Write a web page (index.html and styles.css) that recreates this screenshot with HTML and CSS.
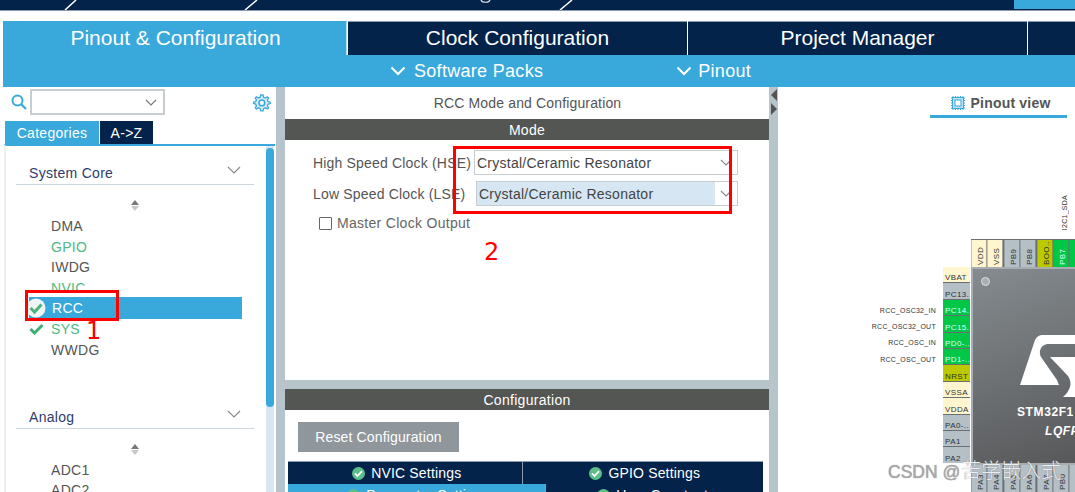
FILE: index.html
```html
<!DOCTYPE html>
<html lang="en">
<head>
<meta charset="utf-8">
<title>RCC Mode and Configuration</title>
<link rel="stylesheet" href="styles.css">
</head>
<body>
<div class="page">
  <header class="topbar">
    <svg class="crumbs" width="1014" height="10" viewBox="0 0 1014 10"><path d="M65 10 L76 0 M245 10 L257 0 M560 10 L572 0" stroke="#fff" stroke-width="1.5" fill="none"/><path d="M481 0 C482 3 489 3 490 0" stroke="#dfe5ea" stroke-width="1.2" fill="none"/></svg>
    <span class="top-accent"></span>
  </header>
  <nav class="tabs">
    <div class="tab tab-active">Pinout &amp; Configuration</div>
    <div class="tab tab-clock">Clock Configuration</div>
    <div class="tab tab-project">Project Manager</div>
    <div class="tab tab-tools"></div>
  </nav>
  <div class="subbar">
    <div class="sub sub-packs"><svg width="16" height="10" viewBox="0 0 16 10"><path d="M1.5 1.5 L8 8 L14.5 1.5" stroke="#fff" stroke-width="2" fill="none"/></svg>Software Packs</div>
    <div class="sub sub-pinout"><svg width="16" height="10" viewBox="0 0 16 10"><path d="M1.5 1.5 L8 8 L14.5 1.5" stroke="#fff" stroke-width="2" fill="none"/></svg>Pinout</div>
  </div>
  <main class="main">
    <aside class="left">
      <div class="search">
        <svg width="16" height="16" viewBox="0 0 16 16"><circle cx="6.5" cy="6.5" r="5" stroke="#39a9dc" stroke-width="2" fill="none"/><path d="M10 10 L15 15" stroke="#39a9dc" stroke-width="2.2"/></svg>
        <div class="combo"><svg width="12" height="7" viewBox="0 0 12 7"><path d="M1 1 L6 6 L11 1" stroke="#777" stroke-width="1.2" fill="none"/></svg></div>
        <svg class="gear" width="19" height="19" viewBox="0 0 24 24"><path d="M12 2.5 L14 2.5 L14.6 5.3 L17 6.3 L19.4 4.8 L20.9 6.3 L19.4 8.7 L20.4 11 L23 11.7 L23 13.3 L20.4 14 L19.4 16.3 L20.9 18.7 L19.4 20.2 L17 18.7 L14.6 19.7 L14 22.5 L11 22.5 L10.4 19.7 L8 18.7 L5.6 20.2 L4.1 18.7 L5.6 16.3 L4.6 14 L2 13.3 L2 11.7 L4.6 11 L5.6 8.7 L4.1 6.3 L5.6 4.8 L8 6.3 L10.4 5.3 L11 2.5 Z" stroke="#39a9dc" stroke-width="1.6" fill="#d6ecf8"/><circle cx="12.5" cy="12.5" r="3.6" stroke="#39a9dc" stroke-width="2" fill="#fff"/></svg>
      </div>
      <div class="cat-tabs">
        <div class="cat cat-on">Categories</div>
        <div class="cat cat-off">A-&gt;Z</div>
      </div>
      <div class="tree">
        <div class="tree-body">
          <div class="group-head"><span>System Core</span><svg width="14" height="8" viewBox="0 0 14 8"><path d="M1 1 L7 7 L13 1" stroke="#888" stroke-width="1.1" fill="none"/></svg></div>
          <div class="sorter"><span class="up"></span><span class="down"></span></div>
          <ul class="items">
            <li>DMA</li>
            <li class="ok">GPIO</li>
            <li>IWDG</li>
            <li class="ok">NVIC</li>
            <li class="sel"><svg class="mark-sel" width="20" height="20" viewBox="0 0 20 20"><circle cx="10" cy="10" r="9.5" fill="#eef5f3"/><path d="M4.5 10 L8.5 14 L15.5 6.5" stroke="#4cb37c" stroke-width="3" fill="none"/></svg>RCC</li>
            <li class="ok"><svg class="mark" width="15" height="12" viewBox="0 0 15 12"><path d="M1.5 6 L5.5 10 L13.5 2" stroke="#3fae72" stroke-width="3" fill="none"/></svg>SYS</li>
            <li>WWDG</li>
          </ul>
          <div class="group-head group-analog"><span>Analog</span><svg width="14" height="8" viewBox="0 0 14 8"><path d="M1 1 L7 7 L13 1" stroke="#888" stroke-width="1.1" fill="none"/></svg></div>
          <div class="sorter sorter-analog"><span class="up"></span><span class="down"></span></div>
          <ul class="items">
            <li>ADC1</li>
            <li>ADC2</li>
          </ul>
        </div>
        <div class="scroll"><div class="thumb"></div></div>
      </div>
      <div class="red box-rcc"></div>
      <span class="note note-1">1</span>
    </aside>
    <div class="split"></div>
    <section class="center">
      <div class="mode-pane">
        <h1 class="pane-title">RCC Mode and Configuration</h1>
        <div class="bar">Mode</div>
        <div class="form">
          <div class="row"><label class="lab">High Speed Clock (HSE)</label>
            <div class="select">Crystal/Ceramic Resonator<svg width="12" height="7" viewBox="0 0 12 7"><path d="M1 1 L6 6 L11 1" stroke="#888" stroke-width="1.1" fill="none"/></svg></div></div>
          <div class="row row-low"><label class="lab">Low Speed Clock (LSE)</label>
            <div class="select select-hi"><span class="hi">Crystal/Ceramic Resonator</span><svg width="12" height="7" viewBox="0 0 12 7"><path d="M1 1 L6 6 L11 1" stroke="#888" stroke-width="1.1" fill="none"/></svg></div></div>
          <div class="check"><span class="box"></span>Master Clock Output</div>
        </div>
        <div class="red box-clock"></div>
        <span class="note note-2">2</span>
      </div>
      <div class="config-pane">
        <div class="bar">Configuration</div>
        <button class="reset">Reset Configuration</button>
        <div class="cfg-tabs">
          <div class="cfg"><svg width="13" height="13" viewBox="0 0 13 13"><circle cx="6.5" cy="6.5" r="6.5" fill="#5cbf8a"/><path d="M3 6.5 L5.5 9 L10 4.2" stroke="#fff" stroke-width="1.8" fill="none"/></svg>NVIC Settings</div>
          <div class="cfg"><svg width="13" height="13" viewBox="0 0 13 13"><circle cx="6.5" cy="6.5" r="6.5" fill="#5cbf8a"/><path d="M3 6.5 L5.5 9 L10 4.2" stroke="#fff" stroke-width="1.8" fill="none"/></svg>GPIO Settings</div>
          <div class="cfg cfg-on"><svg width="13" height="13" viewBox="0 0 13 13"><circle cx="6.5" cy="6.5" r="6.5" fill="#5cbf8a"/><path d="M3 6.5 L5.5 9 L10 4.2" stroke="#fff" stroke-width="1.8" fill="none"/></svg>Parameter Settings</div>
          <div class="cfg cfg-user"><svg width="13" height="13" viewBox="0 0 13 13"><circle cx="6.5" cy="6.5" r="6.5" fill="#5cbf8a"/><path d="M3 6.5 L5.5 9 L10 4.2" stroke="#fff" stroke-width="1.8" fill="none"/></svg>User Constants</div>
        </div>
      </div>
    </section>
    <div class="split split-arrows">
      <span class="arrow arrow-l"></span>
      <span class="arrow arrow-r"></span>
    </div>
    <section class="pinout">
      <div class="view-tab"><svg width="16" height="16" viewBox="0 0 16 16"><path d="M3 1v14M5.5 1v14M8 1v14M10.5 1v14M13 1v14M1 3h14M1 5.5h14M1 8h14M1 10.5h14M1 13h14" stroke="#39a9dc" stroke-width="1"/><rect x="2.5" y="2.5" width="11" height="11" fill="#bfe1f3" stroke="#39a9dc"/><rect x="5" y="5" width="6" height="6" fill="#fff" stroke="#39a9dc"/></svg>Pinout view</div>
      <span class="sig sig-v">I2C1_SDA</span>
      <div class="pins-top">
        <span class="pin v pw">VDD</span><span class="pin v pw">VSS</span><span class="pin v pg">PB9</span><span class="pin v pg">PB8</span><span class="pin v py">BOO..</span><span class="pin v pn">PB7</span><span class="pin v pn"></span>
      </div>
      <div class="pins-left">
        <span class="pin pw">VBAT</span><span class="pin pg">PC13..</span><span class="pin pn">PC14..</span><span class="pin pn">PC15..</span><span class="pin pn">PD0-..</span><span class="pin pn">PD1-..</span><span class="pin py">NRST</span><span class="pin pw">VSSA</span><span class="pin pw">VDDA</span><span class="pin pg">PA0-..</span><span class="pin pg">PA1</span><span class="pin pg">PA2</span>
      </div>
      <div class="sigs">
        <span class="sig">RCC_OSC32_IN</span><span class="sig">RCC_OSC32_OUT</span><span class="sig">RCC_OSC_IN</span><span class="sig">RCC_OSC_OUT</span>
      </div>
      <div class="chip">
        <span class="dot"></span>
        <svg class="st" width="60" height="70" viewBox="0 0 60 70"><path d="M2 52 L17 7 C19 3 22 2 25 2 L57 2 L57 11 L29 11 C21 13 21 20 23 24 L39 47 L41 52 Z M32 24 L57 24 L57 64 L45 64 C52 58 55 50 50 43 Z" fill="#fff"/></svg>
        <span class="chip-name">STM32F1</span>
        <span class="chip-pkg">LQFP</span>
      </div>
      <div class="pins-bottom">
        <span class="pin v pg">PA3</span><span class="pin v pg">PA4</span><span class="pin v pg">PA5</span><span class="pin v pg">PA6</span><span class="pin v pg">PA7</span><span class="pin v pg">PB0</span><span class="pin v pg"></span>
      </div>
      <span class="mark-csdn">CSDN @<span class="mark-cjk">苦学嵌入式</span></span>
    </section>
  </main>
</div>
</body>
</html>
```
FILE: styles.css
```css
* { box-sizing: border-box; }
html, body { margin: 0; padding: 0; background: #fff; }
body { font-family: "Liberation Sans", Arial, sans-serif; color: #555; }
.page { width: 1075px; height: 492px; overflow: hidden; display: flex; flex-direction: column; }

.topbar { height: 11px; flex: none; background: #03234b; border-bottom: 1px solid #8d9aa9; display: flex; justify-content: space-between; }
.crumbs { display: block; }
.top-accent { width: 61px; height: 9px; background: #39a9dc; }

.tabs { margin: 10px 0 0 3px; height: 34px; flex: none; display: flex; gap: 1px; }
.tab { display: flex; align-items: center; justify-content: center; background: #03234b; color: #fff; font-size: 21px; padding-bottom: 2px; border-top: 1px solid #8d9aa9; white-space: nowrap; }
.tab-active { width: 344px; background: #39a9dc; border-top-color: #39a9dc; border-right: 1px solid #b9dff2; padding-left: 2px; }
.tab-clock { width: 339px; }
.tab-project { width: 339px; }
.tab-tools { flex: 1; }

.subbar { margin-left: 3px; height: 32px; flex: none; background: #39a9dc; position: relative; display: flex; color: #fff; font-size: 18px; letter-spacing: .3px; }
.sub { display: flex; align-items: center; gap: 8px; }
.sub-packs { margin-left: 387px; }
.sub-pinout { margin-left: 133px; gap: 6px; }

.main { flex: 1; display: flex; min-height: 0; }
.left { width: 276px; flex: none; padding-left: 3px; position: relative; display: flex; flex-direction: column; min-height: 0; }

.search { display: flex; align-items: center; height: 33px; flex: none; padding: 0 5px 3px 8px; }
.search > svg:first-child { flex: none; margin-top: -1px; }
.combo { width: 135px; height: 26px; margin-left: 3px; border: 2px solid #c8cdd1; display: flex; align-items: center; justify-content: flex-end; padding-right: 6px; }
.gear { margin-left: auto; }

.cat-tabs { display: flex; gap: 1px; padding: 1px 0 0 2px; height: 24px; flex: none; }
.cat { display: flex; align-items: center; justify-content: center; color: #fff; font-size: 14px; letter-spacing: .3px; }
.cat-on { width: 94px; background: #39a9dc; }
.cat-off { width: 53px; background: #03234b; }

.tree { flex: 1; min-height: 0; border-top: 2px solid #39a9dc; margin-left: 1px; border-left: 2px solid #eee; display: flex; overflow: hidden; margin-right: 1px; }
.tree-body { width: 260px; flex: none; padding: 0 0 0 10px; }
.group-head { width: 238px; height: 39px; border-bottom: 1px solid #ccd5dc; display: flex; align-items: flex-end; justify-content: space-between; padding: 0 13px 3px 13px; color: #2c3c6b; font-size: 14px; letter-spacing: .3px; }
.group-head svg { margin-bottom: 7px; }
.group-analog { margin-top: 29px; height: 40px; }
.sorter { width: 238px; height: 30.5px; display: flex; flex-direction: column; align-items: center; justify-content: center; gap: 1px; padding-right: 1px; padding-top: 10px; }
.sorter-analog { height: 30px; }
.up { width: 0; height: 0; border: 4.5px solid transparent; border-top: 0; border-bottom: 5px solid #777; }
.down { width: 0; height: 0; border: 4.5px solid transparent; border-bottom: 0; border-top: 5px solid #c4c8cb; }
.items { list-style: none; margin: 0; padding: 0; width: 226px; }
.items li { height: 20.7px; padding-left: 35px; display: flex; align-items: center; font-size: 14px; letter-spacing: .3px; color: #555; position: relative; }
.items .ok { color: #4fb97f; }
.items .sel { background: #39a9dc; color: #fff; margin-left: 13px; padding-left: 23px; width: 213px; height: 22px; margin-top: -1px; margin-bottom: -.3px; }
.mark-sel { position: absolute; left: -3px; top: 1px; }
.mark { position: absolute; left: 13px; top: 4px; }

.scroll { width: 8px; flex: none; background: #d6e6f3; }
.thumb { height: 259px; margin-top: 2px; background: #39a9dc; border-radius: 4px; }

.red { position: absolute; border: 3px solid #f00; pointer-events: none; }
.box-rcc { left: 25px; top: 203px; width: 94px; height: 31px; }
.note { position: absolute; color: #f00; font-family: "DejaVu Sans", sans-serif; font-size: 24px; line-height: 1; }
.note-1 { left: 86px; top: 232px; }

.split { width: 9px; flex: none; background: #b8c4cc; position: relative; }
.split-arrows { display: flex; flex-direction: column; align-items: center; padding-top: 2px; gap: 2px; }
.arrow { width: 0; height: 0; border: 6px solid transparent; }
.arrow-l { border-left: 0; border-right: 6px solid #555; }
.arrow-r { border-right: 0; border-left: 6px solid #555; }

.center { width: 484px; flex: none; display: flex; flex-direction: column; background: #b8c4cc; min-height: 0; }
.mode-pane { height: 293px; flex: none; background: #fff; position: relative; }
.pane-title { margin: 0; height: 32px; display: flex; align-items: center; justify-content: center; font-weight: normal; font-size: 14px; letter-spacing: .15px; padding-left: 1px; color: #555; }
.bar { height: 21px; flex: none; background: #545654; color: #fff; display: flex; align-items: center; justify-content: center; font-size: 14px; letter-spacing: .3px; }
.form { padding: 10px 0 0 28px; }
.row { display: flex; align-items: center; height: 25px; }
.row-low { margin-top: 6px; }
.lab { width: 161px; font-size: 14px; letter-spacing: .18px; color: #555; flex: none; white-space: nowrap; }
.select { width: 264px; height: 25px; border: 1px solid #c8cdd1; display: flex; align-items: center; justify-content: space-between; padding: 0 5px 0 2px; font-size: 14px; letter-spacing: .25px; color: #444; }
.select-hi { width: 262px; margin-left: 2px; padding: 0 5px 0 0; }
.hi { flex: none; width: 238px; height: 23px; background: #d6e6f3; padding-left: 2px; display: flex; align-items: center; }
.check { display: flex; align-items: center; gap: 5px; height: 22px; margin: 6px 0 0 6px; font-size: 14px; letter-spacing: .3px; color: #666; }
.box { width: 13px; height: 13px; border: 1px solid #666; border-radius: 1px; }
.box-clock { left: 168px; top: 59px; width: 279px; height: 68px; }
.note-2 { left: 199px; top: 153px; }

.config-pane { flex: 1; margin-top: 9px; background: #fff; display: flex; flex-direction: column; min-height: 0; overflow: hidden; }
.reset { align-self: flex-start; margin: 12px 0 0 13px; width: 161px; height: 30px; border: 0; background: #8f979d; color: #fff; font: 14px "Liberation Sans", Arial, sans-serif; letter-spacing: .15px; flex: none; }
.cfg-tabs { margin: 9px 0 0 3px; width: 475px; display: grid; grid-template-columns: 234px 241px; grid-auto-rows: 22px; border-top: 1px solid #8d9aa9; flex: none; }
.cfg { background: #03234b; color: #fff; font-size: 14px; letter-spacing: .17px; display: flex; align-items: center; justify-content: center; gap: 6.5px; padding-left: 3px; border-left: 1px solid #8d9aa9; white-space: nowrap; }
.cfg:first-child { border-left: 0; }
.cfg-on { background: #39a9dc; border-left: 0; margin-right: -23px; }
.cfg-user { border-left: 1px solid #8d9aa9; margin-left: 23px; }

.pinout { flex: 1; min-width: 0; position: relative; overflow: hidden; background: #fff; }
.view-tab { position: absolute; left: 152px; top: 0; width: 137px; height: 31px; padding: 3px 0 0 3px; border-bottom: 3px solid #39a9dc; display: flex; align-items: center; justify-content: center; gap: 5px; font-weight: bold; font-size: 14px; letter-spacing: .2px; color: #555; }
.pins-top { position: absolute; left: 193px; top: 152px; display: flex; gap: 1px; height: 28px; background: #6b6f72; padding-top: 1px; }
.pins-bottom { position: absolute; left: 193px; top: 378px; display: flex; gap: 1px; height: 27px; background: #6b6f72; }
.pins-left { position: absolute; left: 165px; top: 180px; width: 27px; display: flex; flex-direction: column; gap: 1px; background: #6b6f72; }
.pin { display: flex; align-items: center; font-size: 8px; letter-spacing: .4px; color: #333; overflow: hidden; }
.pins-left .pin { height: 15.4px; padding-left: 2px; align-items: flex-end; line-height: 9px; white-space: nowrap; }
.pins-top .pin, .pins-bottom .pin { width: 15.4px; writing-mode: vertical-rl; transform: rotate(180deg); padding-top: 2px; padding-right: 3px; justify-content: flex-start; align-items: center; white-space: nowrap; }
.pw { background: #fff5cf; }
.pg { background: #b4bfc6; }
.pn { background: #00c846; color: #dff; }
.py { background: #bdc900; }
.sigs { position: absolute; right: 139px; top: 220px; display: flex; flex-direction: column; align-items: flex-end; gap: 8.2px; }
.sig { font-size: 7px; letter-spacing: .27px; color: #333; line-height: 8px; white-space: nowrap; }
.sig-v { position: absolute; left: 283px; top: 108px; writing-mode: vertical-rl; transform: rotate(180deg); }
.chip { position: absolute; left: 193px; top: 180px; width: 110px; height: 198px; background: linear-gradient(160deg, #858b8f, #57585a); border: 2px solid #a7adb1; overflow: hidden; }
.dot { position: absolute; left: 8px; top: 8px; width: 9px; height: 9px; border-radius: 50%; background: #a9b0b4; border: 1px solid #ddd; }
.st { position: absolute; left: 45px; top: 64px; }
.chip-name { position: absolute; left: 44px; top: 136px; color: #fff; font-weight: bold; font-size: 12px; letter-spacing: .6px; white-space: nowrap; }
.chip-pkg { position: absolute; left: 72px; top: 155px; color: #fff; font-weight: bold; font-style: italic; font-size: 12px; letter-spacing: .6px; }
.mark-csdn { position: absolute; left: 110px; top: 372px; font-family: "Liberation Sans", "Noto Sans CJK SC", sans-serif; font-size: 17.5px; line-height: 22px; color: #a9a9a9; text-shadow: 0 0 1px #888; white-space: nowrap; }
.mark-cjk { font-size: 20px; font-family: "Noto Sans CJK SC", sans-serif; font-weight: 300; margin-left: 1px; color: #eee; text-shadow: 0 0 1px #666; }
```
